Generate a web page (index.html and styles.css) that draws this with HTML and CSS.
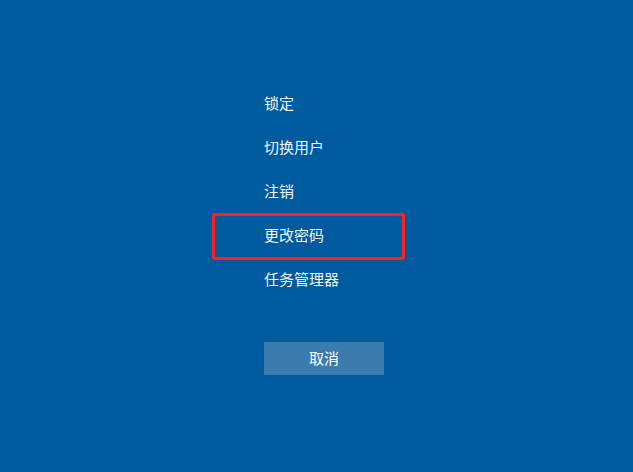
FILE: index.html
```html
<!DOCTYPE html>
<html lang="zh-CN">
<head>
<meta charset="utf-8">
<title>安全选项</title>
<link rel="stylesheet" href="styles.css">
</head>
<body>
<div class="screen">
  <div class="panel">
    <ul class="menu">
      <li class="item">锁定</li>
      <li class="item">切换用户</li>
      <li class="item">注销</li>
      <li class="item">更改密码</li>
      <li class="item">任务管理器</li>
    </ul>
    <button class="cancel">取消</button>
  </div>
  <div class="highlight"></div>
</div>
</body>
</html>
```

FILE: styles.css
```css
html, body {
  margin: 0;
  padding: 0;
  height: 100%;
  background: #005a9e;
}

.screen {
  position: relative;
  width: 633px;
  height: 472px;
  background: #005a9e;
  font-family: "Microsoft YaHei", "Noto Sans CJK SC", "Noto Sans", sans-serif;
  color: #ffffff;
  overflow: hidden;
}

.panel {
  display: flex;
  flex-direction: column;
  align-items: flex-start;
  padding: 81px 0 0 264px;
}

.menu {
  list-style: none;
  margin: 0;
  padding: 0;
}

.item {
  height: 44px;
  line-height: 44px;
  font-size: 15px;
  color: #f2f6fa;
}

.cancel {
  margin-top: 41px;
  width: 120px;
  height: 33px;
  border: none;
  padding: 0 0 1px;
  background: #3b7bad;
  color: #ffffff;
  font-family: inherit;
  font-size: 15px;
  line-height: 32px;
}

.highlight {
  position: absolute;
  left: 212px;
  top: 213px;
  width: 193px;
  height: 47px;
  box-sizing: border-box;
  border: 3px solid #ff2222;
  border-radius: 3px;
}
```
